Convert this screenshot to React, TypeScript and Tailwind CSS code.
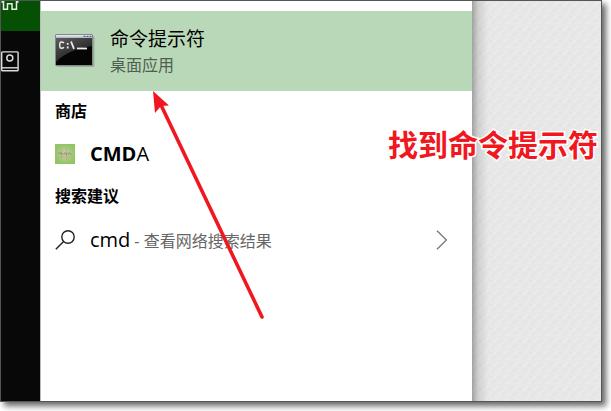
import type { ReactNode } from 'react'

function HomeIcon() {
  return (
    <svg width="20" height="10" viewBox="0 0 20 10" fill="none" stroke="#e8efe8" strokeWidth="1.5">
      <path d="M0.5 1.5 L2.5 0 M17.5 1.5 L15.5 0 M2.5 0 V8.2 H6.5 V2.8 H11 V8.2 H15.5 V0" />
    </svg>
  )
}

function NotebookIcon() {
  return (
    <svg width="18" height="21" viewBox="0 0 18 21" fill="none" stroke="#dcdcdc" strokeWidth="1.4">
      <rect x="0.7" y="0.9" width="16.4" height="18.8" rx="0.8" />
      <path d="M1 16.8 H17" />
      <circle cx="8.8" cy="7" r="3" strokeWidth="1.5" />
    </svg>
  )
}

function TerminalIcon() {
  return (
    <svg width="40" height="34" viewBox="0 0 40 34">
      <defs>
        <linearGradient id="term-bar" x1="0" y1="0" x2="0" y2="1">
          <stop offset="0" stopColor="#eef0f8" />
          <stop offset="1" stopColor="#a9b0c4" />
        </linearGradient>
        <linearGradient id="term-gloss" x1="0" y1="0" x2="0.7" y2="1">
          <stop offset="0" stopColor="#5c5c5c" />
          <stop offset="1" stopColor="#161616" />
        </linearGradient>
      </defs>
      <rect x="1.5" y="2" width="38" height="31" rx="1.5" fill="#6f8470" opacity="0.45" />
      <rect x="0.5" y="0.5" width="37" height="31" rx="1" fill="#050505" stroke="#848a88" />
      <path d="M1 4 H37 V12 C22 14 8 20 1 28 Z" fill="url(#term-gloss)" />
      <rect x="1" y="1" width="36" height="3" fill="url(#term-bar)" />
      <path d="M28.5 2.3 h2 M31.5 2.3 h2 M34.5 2.3 h2" stroke="#4e6090" strokeWidth="1.3" />
      <g fill="none" stroke="#ececec" strokeWidth="1.4">
        <path d="M9 9 Q7.8 8 6.5 8 Q4.8 8 4.8 9.6 V12.8 Q4.8 14.3 6.5 14.3 Q8 14.3 9 13.3" />
        <path d="M12.7 9 v1.8 M12.7 12.6 v1.8" strokeWidth="1.8" />
        <path d="M16 7.5 L19 14.8" strokeWidth="1.8" />
        <path d="M22 14.5 H32" strokeWidth="1.8" />
      </g>
    </svg>
  )
}

function StoreAppIcon() {
  return (
    <svg width="20" height="20" viewBox="0 0 20 20">
      <defs>
        <radialGradient id="app-glow">
          <stop offset="0" stopColor="#c3d5a6" />
          <stop offset="1" stopColor="#93c465" />
        </radialGradient>
      </defs>
      <rect width="20" height="20" fill="url(#app-glow)" />
      <path d="M6.5 5 V15 M11.5 4 V16 M4 13 H16" stroke="#cf9d83" strokeWidth="1" opacity="0.75" />
      <path d="M3 10 Q4 8 5.5 9 M6 11 V8.5 L8 10.5 L10 8.5 V11 M11 8.5 Q14 9.5 11 11 M13 11 L14.5 8.5 L16.5 11" fill="none" stroke="#8f9586" strokeWidth="1" />
    </svg>
  )
}

function SearchIcon() {
  return (
    <svg width="20" height="20" viewBox="0 0 20 20" fill="none" stroke="#222" strokeWidth="1.4">
      <circle cx="13" cy="7" r="6.2" />
      <path d="M8.6 11.4 L0.8 19.2" />
    </svg>
  )
}

function ChevronIcon() {
  return (
    <svg width="12" height="20" viewBox="0 0 12 20" fill="none" stroke="#777" strokeWidth="1.3">
      <path d="M1 0.8 L10.4 10 L1 19.2" />
    </svg>
  )
}

function Wallpaper() {
  return (
    <svg className="h-full w-full" aria-hidden="true">
      <defs>
        <pattern id="grain" width="10" height="12" patternUnits="userSpaceOnUse">
          <path d="M1 6 L6 1 M6 11 L9 8 M3 11 L4 10" stroke="#f0f0f0" strokeWidth="1" />
          <path d="M7 5 L9 3 M1 10 L3 8" stroke="#e0e0e0" strokeWidth="1" />
        </pattern>
        <linearGradient id="edge" x1="0" y1="0" x2="1" y2="0">
          <stop offset="0" stopColor="#000" stopOpacity="0.3" />
          <stop offset="0.05" stopColor="#000" stopOpacity="0.1" />
          <stop offset="0.13" stopColor="#000" stopOpacity="0" />
        </linearGradient>
      </defs>
      <rect width="100%" height="100%" fill="#e7e7e7" />
      <rect width="100%" height="100%" fill="url(#grain)" />
      <rect width="100%" height="100%" fill="url(#edge)" />
    </svg>
  )
}

function SectionTitle({ children }: { children: ReactNode }) {
  return <h2 className="px-[14px] text-[16px] leading-6 font-bold">{children}</h2>
}

export default function App() {
  return (
    <div className="flex min-h-screen bg-white pr-[9px] pb-[9px] font-['Open_Sans','Noto_Sans_CJK_SC',sans-serif] text-black">
      <div className="relative flex flex-1 border border-[#555] shadow-[4px_4px_6px_rgba(0,0,0,0.6)]">
        <nav aria-label="侧栏" className="flex w-10 flex-col border-r border-[#bbb] bg-[#080808]">
          <button aria-label="主页" className="flex h-[30px] items-start bg-[#055005]">
            <HomeIcon />
          </button>
          <button aria-label="笔记本" className="flex h-[60px] items-center">
            <NotebookIcon />
          </button>
        </nav>

        <main className="relative flex-1 bg-white pt-[10px]">
          <button className="flex h-20 w-full items-center gap-[15px] bg-[#b9d8b8] px-[14px] text-left">
            <TerminalIcon />
            <span className="flex flex-col">
              <span className="text-[19px] leading-7">命令提示符</span>
              <span className="text-[16px] leading-6 text-[#4f5f4f]">桌面应用</span>
            </span>
          </button>

          <section className="pt-2">
            <SectionTitle>商店</SectionTitle>
            <button className="flex h-[61px] w-full items-center gap-[15px] px-[14px] text-left text-[20px]">
              <StoreAppIcon />
              <span>
                <b>CMD</b>A
              </span>
            </button>
          </section>

          <section>
            <SectionTitle>搜索建议</SectionTitle>
            <button className="flex h-16 w-full items-center gap-[15px] pr-6 pl-[14px] text-left">
              <SearchIcon />
              <span className="flex flex-1 items-baseline gap-1 text-[16px] text-[#666]">
                <span className="text-[20px] text-black">cmd</span>
                <span>- 查看网络搜索结果</span>
              </span>
              <ChevronIcon />
            </button>
          </section>

          {/* Pointer to the matched app */}
          <svg width="112" height="230" viewBox="0 0 112 230" aria-hidden="true" className="pointer-events-none absolute top-[90px] left-[111px]">
            <path d="M9 14 L110 226" stroke="#f01820" strokeWidth="3.6" strokeLinecap="round" />
            <path d="M1 0 L17 14.5 L9 15 L3 22 Z" fill="#f01820" />
          </svg>
        </main>

        <div className="w-[129px]">
          <Wallpaper />
        </div>

        <p className="absolute top-[122px] right-[3px] text-[30px] leading-[44px] font-bold whitespace-nowrap text-[#f01820] [paint-order:stroke_fill] [-webkit-text-stroke:3px_white]">
          找到命令提示符
        </p>
      </div>
    </div>
  )
}
